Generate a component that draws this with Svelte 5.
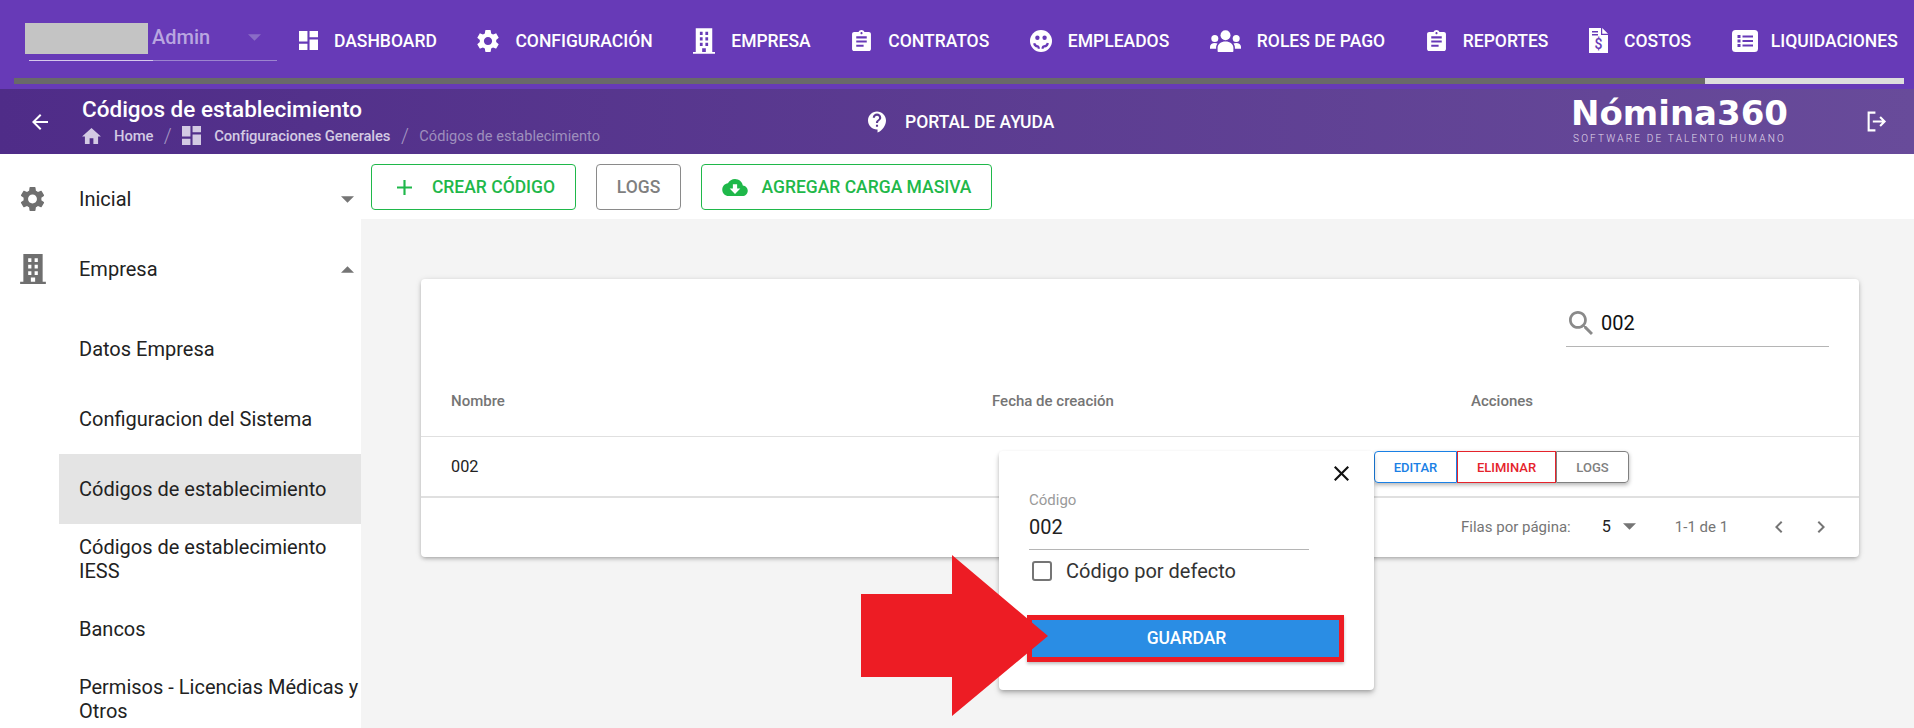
<script>
  const P = {
    dash: 'M3 13h8V3H3v10zm0 8h8v-6H3v6zm10 0h8V11h-8v10zm0-18v6h8V3h-8z',
    gear: 'M19.14 12.94c.04-.3.06-.61.06-.94 0-.32-.02-.64-.07-.94l2.03-1.58c.18-.14.23-.41.12-.61l-1.92-3.32c-.12-.22-.37-.29-.59-.22l-2.39.96c-.5-.38-1.03-.7-1.62-.94l-.36-2.54c-.04-.24-.24-.41-.48-.41h-3.84c-.24 0-.43.17-.47.41l-.36 2.54c-.59.24-1.13.57-1.62.94l-2.39-.96c-.22-.08-.47 0-.59.22L2.74 8.87c-.12.21-.08.47.12.61l2.03 1.58c-.05.3-.09.63-.09.94s.02.64.07.94l-2.03 1.58c-.18.14-.23.41-.12.61l1.92 3.32c.12.22.37.29.59.22l2.39-.96c.5.38 1.03.7 1.62.94l.36 2.54c.05.24.24.41.48.41h3.84c.24 0 .44-.17.47-.41l.36-2.54c.59-.24 1.13-.56 1.62-.94l2.39.96c.22.08.47 0 .59-.22l1.92-3.32c.12-.22.07-.47-.12-.61l-2.01-1.58zM12 15.6c-1.98 0-3.6-1.62-3.6-3.6s1.62-3.6 3.6-3.6 3.6 1.62 3.6 3.6-1.62 3.6-3.6 3.6z',
    building: 'M3 0h18v26h3v2H0v-2h3zM7.5 4v3.5h3V4zM13.5 4v3.5h3V4zM7.5 10v3.5h3V10zM13.5 10v3.5h3V10zM7.5 16v3.5h3V16zM13.5 16v3.5h3V16zM10 22v4h4v-4z',
    clip: 'M19 3h-4.18C14.4 1.84 13.3 1 12 1c-1.3 0-2.4.84-2.82 2H5c-1.1 0-2 .9-2 2v14c0 1.1.9 2 2 2h14c1.1 0 2-.9 2-2V5c0-1.1-.9-2-2-2zm-7 0c.55 0 1 .45 1 1s-.45 1-1 1-1-.45-1-1 .45-1 1-1zm2 14H7v-2h7v2zm3-4H7v-2h10v2zm0-4H7V7h10v2z',
    home: 'M10 20v-6h4v6h5v-8h3L12 3 2 12h3v8z',
    help: 'M11.5 2C6.81 2 3 5.81 3 10.5S6.81 19 11.5 19h.5v3c4.86-2.34 8-7 8-11.5C20 5.81 16.19 2 11.5 2zm1 14.5h-2v-2h2v2zm0-3.5h-2c0-3.25 3-3 3-5 0-1.1-.9-2-2-2s-2 .9-2 2h-2c0-2.21 1.79-4 4-4s4 1.79 4 4c0 2.5-3 2.75-3 5z',
    back: 'M20 11H7.83l5.59-5.59L12 4l-8 8 8 8 1.41-1.41L7.83 13H20v-2z',
    close: 'M19 6.41L17.59 5 12 10.59 6.41 5 5 6.41 10.59 12 5 17.59 6.41 19 12 13.41 17.59 19 19 17.59 13.41 12z',
    add: 'M19 13h-6v6h-2v-6H5v-2h6V5h2v6h6v2z',
    cloud: 'M19.35 10.04C18.67 6.59 15.64 4 12 4 9.11 4 6.6 5.64 5.35 8.04 2.34 8.36 0 10.91 0 14c0 3.31 2.69 6 6 6h13c2.76 0 5-2.24 5-5 0-2.64-2.05-4.78-4.65-4.96zM17 13l-5 5-5-5h3V9h4v4h3z',
    search: 'M15.5 14h-.79l-.28-.27C15.41 12.59 16 11.11 16 9.5 16 5.91 13.09 3 9.5 3S3 5.91 3 9.5 5.91 16 9.5 16c1.61 0 3.09-.59 4.23-1.57l.27.28v.79l5 4.99L20.49 19l-4.99-5zm-6 0C7.01 14 5 11.99 5 9.5S7.01 5 9.5 5 14 7.01 14 9.5 11.99 14 9.5 14z',
    left: 'M15.41 7.41L14 6l-6 6 6 6 1.41-1.41L10.83 12z',
    right: 'M10 6L8.59 7.41 13.17 12l-4.58 4.59L10 18l6-6z',
    down: 'M7 10l5 5 5-5z',
    up: 'M7 14l5-5 5 5z',
    logout: 'M10 2.5H2.5v19H10v-2H4.5v-15H10zM15.2 7l-1.4 1.4 2.6 2.6H7.5v2h8.9l-2.6 2.6 1.4 1.4 5-5z'
  };

  const nav = [
    { label: 'DASHBOARD', k: 'dash', box: '3 3 18 18', w: 19, h: 19 },
    { label: 'CONFIGURACIÓN', k: 'gear', box: '2.5 1.5 19 21', w: 22, h: 24 },
    { label: 'EMPRESA', k: 'building', box: '0 0 24 28', w: 22, h: 26 },
    { label: 'CONTRATOS', k: 'clip', box: '3 1 18 20', w: 21, h: 21 },
    { label: 'EMPLEADOS', k: 'face', w: 22, h: 22 },
    { label: 'ROLES DE PAGO', k: 'groups', w: 31, h: 22 },
    { label: 'REPORTES', k: 'clip', box: '3 1 18 20', w: 21, h: 21 },
    { label: 'COSTOS', k: 'doc', w: 19, h: 25 },
    { label: 'LIQUIDACIONES', k: 'list', w: 26, h: 22 }
  ];

  const subItems = [
    { label: 'Datos Empresa' },
    { label: 'Configuracion del Sistema' },
    { label: 'Códigos de establecimiento', active: true },
    { label: 'Códigos de establecimiento IESS' },
    { label: 'Bancos' },
    { label: 'Permisos - Licencias Médicas y Otros' }
  ];
</script>

{#snippet ic(d, box, w, h, cls = '')}
  <svg class={cls} viewBox={box} width={w} height={h} fill="currentColor" fill-rule="evenodd" aria-hidden="true"><path {d} /></svg>
{/snippet}

<div class="page">
  <header class="top">
    <div class="toprow">
      <div class="user">
        <div class="blank"></div>
        <span class="admin">Admin</span>
        <span class="caret">{@render ic(P.down, '7 10 10 5', 13, 7)}</span>
      </div>
      <nav class="nav">
        {#each nav as n}
          <div class="navitem">
            {#if n.k === 'face'}
              <svg viewBox="0 0 22 22" width={n.w} height={n.h} aria-hidden="true">
                <circle cx="11" cy="11" r="11" fill="#fff" />
                <circle cx="7.4" cy="7.8" r="2.2" fill="#673ab7" />
                <circle cx="14.6" cy="7.8" r="2.2" fill="#673ab7" />
                <path d="M4.2 13.2c.3 1.6 1.6 3 3.3 3.2.8.1 1.2.7 1.3 2.3M17.8 13c-.3 2-1.8 3.2-3.6 3.4-1 .1-1.6.7-1.6 2.4" fill="none" stroke="#673ab7" stroke-width="2.2" />
              </svg>
            {:else if n.k === 'groups'}
              <svg viewBox="0 0 31 22" width={n.w} height={n.h} fill="#fff" aria-hidden="true">
                <circle cx="15.5" cy="5.2" r="5" />
                <path d="M7.6 21c0 .6.4 1 1 1h13.8c.6 0 1-.4 1-1v-3.2c0-3.6-3.4-6.3-7.9-6.3s-7.9 2.7-7.9 6.3z" />
                <circle cx="4.8" cy="8.5" r="3.5" />
                <circle cx="26.2" cy="8.5" r="3.5" />
                <path d="M0 18.8v-2c0-2.4 2.2-3.8 4.8-3.8 1 0 1.9.2 2.7.6-.9 1.2-1.4 2.6-1.4 4.2v1zM31 18.8v-2c0-2.4-2.2-3.8-4.8-3.8-1 0-1.9.2-2.7.6.9 1.2 1.4 2.6 1.4 4.2v1z" />
              </svg>
            {:else if n.k === 'doc'}
              <svg viewBox="0 0 19 25" width={n.w} height={n.h} aria-hidden="true">
                <path d="M0 0h12v7h7v18H0zM13.2 0L19 5.8h-5.8z" fill="#fff" />
                <path d="M3 3h6v1.5H3zM3 6h6v1.5H3z" fill="#673ab7" />
                <text x="9.5" y="20.5" text-anchor="middle" class="dollar">$</text>
              </svg>
            {:else if n.k === 'list'}
              <svg viewBox="0 0 26 22" width={n.w} height={n.h} aria-hidden="true">
                <rect width="26" height="22" rx="3.5" fill="#fff" />
                <path d="M5.5 5h3v3h-3zM5.5 9.5h3v3h-3zM5.5 14h3v3h-3zM10.5 5.5h10.5v2H10.5zM10.5 10h10.5v2H10.5zM10.5 14.5h10.5v2H10.5z" fill="#673ab7" />
              </svg>
            {:else}
              {@render ic(P[n.k], n.box, n.w, n.h)}
            {/if}
            <span>{n.label}</span>
          </div>
        {/each}
      </nav>
    </div>
    <div class="progress"><div class="fill"></div></div>
  </header>

  <section class="sub">
    <span class="backbtn">{@render ic(P.back, '0 0 24 24', 24, 24)}</span>
    <div class="titles">
      <div class="title">Códigos de establecimiento</div>
      <div class="crumbs">
        {@render ic(P.home, '2 3 20 17', 19, 16, 'c1')}
        <span class="cb">Home</span>
        <i>/</i>
        {@render ic(P.dash, '3 3 18 18', 19, 19, 'c1')}
        <span class="cb">Configuraciones Generales</span>
        <i>/</i>
        <span class="cl">Códigos de establecimiento</span>
      </div>
    </div>
    <div class="portal">
      {@render ic(P.help, '3 2 17 20', 18, 22)}
      <span>PORTAL DE AYUDA</span>
    </div>
    <div class="logo">
      <div class="lname">Nómina360</div>
      <div class="ltag">SOFTWARE DE TALENTO HUMANO</div>
    </div>
    <span class="logoutbtn">{@render ic(P.logout, '0 0 24 24', 25, 25)}</span>
  </section>

  <div class="body">
    <aside class="side">
      <div class="sideitem">
        <span class="sicon">{@render ic(P.gear, '2.5 1.5 19 21', 25, 26)}</span>
        <span class="stext">Inicial</span>
        <span class="sarrow">{@render ic(P.down, '7 10 10 5', 13, 7)}</span>
      </div>
      <div class="sideitem">
        <span class="sicon">{@render ic(P.building, '0 0 24 28', 26, 30)}</span>
        <span class="stext">Empresa</span>
        <span class="sarrow">{@render ic(P.up, '7 9 10 5', 13, 7)}</span>
      </div>
      <div class="sublist">
        {#each subItems as s}
          <div class="subitem" class:active={s.active}>{s.label}</div>
        {/each}
      </div>
    </aside>

    <main class="main">
      <div class="toolbar">
        <button class="btn green w1">{@render ic(P.add, '5 5 14 14', 15, 15)}<span>CREAR CÓDIGO</span></button>
        <button class="btn gray">LOGS</button>
        <button class="btn green w2">{@render ic(P.cloud, '0 4 24 16', 26, 17)}<span>AGREGAR CARGA MASIVA</span></button>
      </div>
      <div class="content">
        <div class="card">
          <div class="cardtop">
            <div class="search">
              {@render ic(P.search, '3 3 17.5 17.5', 24, 24)}
              <span>002</span>
            </div>
          </div>
          <div class="row head">
            <span class="c1w">Nombre</span>
            <span class="c2w">Fecha de creación</span>
            <span>Acciones</span>
          </div>
          <div class="row data">
            <span class="val">002</span>
            <div class="acts">
              <button class="act blue">EDITAR</button>
              <button class="act red">ELIMINAR</button>
              <button class="act grey">LOGS</button>
            </div>
          </div>
          <div class="pager">
            <span>Filas por página:</span>
            <span class="num">5</span>
            <span class="pcaret">{@render ic(P.down, '7 10 10 5', 13, 7)}</span>
            <span class="range">1-1 de 1</span>
            <span class="chev">{@render ic(P.left, '0 0 24 24', 24, 24)}</span>
            <span class="chev ch2">{@render ic(P.right, '0 0 24 24', 24, 24)}</span>
          </div>
        </div>
      </div>
    </main>
  </div>

  <div class="modal">
    <span class="closebtn">{@render ic(P.close, '5 5 14 14', 15, 15)}</span>
    <div class="flabel">Código</div>
    <div class="fval">002</div>
    <label class="check"><span class="box"></span><span>Código por defecto</span></label>
    <div class="savewrap"><button class="save">GUARDAR</button></div>
  </div>

  <svg class="bigarrow" viewBox="0 0 187 161" width="187" height="161" aria-hidden="true">
    <path d="M0 39h91V0l96 81-96 80v-39H0z" fill="#ed1c24" />
  </svg>
</div>

<style>
  :global(body) { margin: 0; background: #fff; }
  .page {
    position: relative;
    width: 1914px;
    height: 728px;
    overflow: hidden;
    font-family: Roboto, "Liberation Sans", sans-serif;
    color: #222;
  }
  .top { height: 89px; background: #673ab7; }
  .toprow { height: 78px; display: flex; align-items: center; padding-left: 25px; box-sizing: border-box; }
  .user {
    position: relative;
    width: 273px;
    height: 78px;
    flex: none;
    box-sizing: border-box;
    padding-top: 23px;
    display: flex;
    align-items: flex-start;
  }
  .blank { width: 123px; height: 31px; background: #c4c4c4; }
  .admin { margin-left: 4px; font-size: 20px; font-weight: 500; line-height: 29px; color: #b9a6e0; }
  .caret { margin-left: 38px; margin-top: 11px; color: #8a6cc6; display: flex; }
  .user::after {
    content: "";
    position: absolute;
    left: 4px;
    top: 60px;
    width: 248px;
    height: 1px;
    background: linear-gradient(90deg, #d5c8ec 0 50%, #9c84cf 50%);
  }
  .nav { display: flex; align-items: center; gap: 40.6px; padding: 3px 0 0 1px; }
  .navitem { display: flex; align-items: center; gap: 16px; color: #fff; font-size: 17.5px; font-weight: 500; white-space: nowrap; }
  .navitem:last-child { gap: 13px; }
  .dollar { font: 500 14px Roboto, sans-serif; fill: #673ab7; }
  .progress { height: 6px; margin: 0 10px 0 14px; background: #ddd; }
  .fill { width: 1691px; height: 100%; background: #696969; }

  .sub {
    height: 65px;
    display: flex;
    align-items: center;
    background: linear-gradient(90deg, #4f2c88 0%, #684b9a 100%);
    color: #fff;
  }
  .backbtn { margin-left: 28px; display: flex; }
  .titles { margin-left: 30px; width: 786px; flex: none; }
  .title { font-size: 22.5px; font-weight: 500; line-height: 28px; margin-top: -1px; }
  .crumbs { display: flex; align-items: center; height: 24px; margin-top: 1px; color: #d3cae3; font-size: 14.8px; }
  .crumbs :global(.c1) { flex: none; margin-right: 13px; }
  .crumbs i { font-style: normal; font-size: 20px; font-weight: 300; margin: 0 10.5px; color: #a596c3; }
  .cb { font-weight: 500; letter-spacing: -0.1px; }
  .cl { color: #9e8fbd; font-size: 14.6px; }
  .portal { display: flex; align-items: center; gap: 19px; font-size: 17.5px; font-weight: 500; width: 700px; flex: none; }
  .logo { width: 223px; flex: none; text-align: center; align-self: flex-start; padding-top: 4px; }
  .lname { font-family: "DejaVu Sans", sans-serif; font-size: 34px; font-weight: 700; line-height: 40px; white-space: nowrap; }
  .ltag { font-size: 10px; font-weight: 300; letter-spacing: 2.2px; line-height: 12px; color: #e2dcec; white-space: nowrap; }
  .logoutbtn { margin-left: 74px; display: flex; }

  .body { display: flex; height: 574px; }
  .side { width: 361px; flex: none; background: #fff; box-sizing: border-box; padding-top: 10px; }
  .sideitem { height: 70px; display: flex; align-items: center; font-size: 20px; color: #222; }
  .sicon { width: 79px; padding-left: 20px; box-sizing: border-box; display: flex; color: #6f6f6f; flex: none; }
  .stext { flex: 1; }
  .sarrow { color: #757575; display: flex; margin-right: 7px; }
  .sublist { margin-top: 10px; padding-left: 59px; }
  .subitem {
    min-height: 70px;
    display: flex;
    align-items: center;
    padding-left: 20px;
    font-size: 20px;
    line-height: 24px;
    color: #222;
    box-sizing: border-box;
  }
  .subitem.active { background: #e4e4e4; }

  .main { flex: 1; display: flex; flex-direction: column; min-width: 0; }
  .toolbar { height: 65px; flex: none; display: flex; align-items: flex-start; padding: 10px 0 0 10px; gap: 20px; box-sizing: border-box; }
  .btn {
    height: 46px;
    box-sizing: border-box;
    border-radius: 4px;
    background: #fff;
    font-family: inherit;
    font-size: 17.5px;
    font-weight: 500;
    display: flex;
    align-items: center;
    justify-content: center;
    padding: 0;
  }
  .green { border: 1px solid #1fb84a; color: #1fb84a; }
  .gray { border: 1px solid #8a8a8a; color: #7f7f7f; width: 85px; }
  .w1 { width: 205px; gap: 20px; padding-left: 5px; }
  .w2 { width: 291px; gap: 14px; }
  .content { flex: 1; background: #f4f4f4; padding: 60px 55px 0 60px; }
  .card {
    height: 278px;
    background: #fff;
    border-radius: 4px;
    box-shadow: 0 2px 4px -1px rgba(0,0,0,.3), 0 1px 6px rgba(0,0,0,.12);
    display: flex;
    flex-direction: column;
  }
  .cardtop { height: 68px; flex: none; display: flex; justify-content: flex-end; padding-right: 30px; box-sizing: border-box; }
  .search {
    width: 263px;
    height: 68px;
    box-sizing: border-box;
    border-bottom: 1px solid #b5b5b5;
    display: flex;
    align-items: center;
    padding: 21px 0 0 3px;
    gap: 8px;
    color: #8a8a8a;
  }
  .search span { font-size: 20px; color: #111; }
  .row { display: flex; align-items: center; padding-left: 30px; border-bottom: 1px solid #e0e0e0; box-sizing: border-box; }
  .head { height: 90px; font-size: 15px; font-weight: 500; color: #757575; padding-top: 18px; }
  .c1w { width: 541px; }
  .c2w { width: 479px; }
  .data { height: 61px; border-bottom-width: 2px; padding-bottom: 1px; }
  .val { font-size: 16.25px; color: #222; width: 923px; flex: none; }
  .acts { display: flex; align-self: flex-start; margin-top: 14px; border-radius: 4px; box-shadow: 0 2px 4px rgba(0,0,0,.3); }
  .act { height: 32px; box-sizing: border-box; background: #fff; font-family: inherit; font-size: 13px; font-weight: 500; padding: 0; }
  .blue { width: 83px; border: 1px solid #1a80e5; color: #1a80e5; border-radius: 4px 0 0 4px; }
  .red { width: 99px; border: 1px solid #e5232b; color: #e5232b; }
  .grey { width: 73px; border: 1px solid #808080; color: #808080; border-radius: 0 4px 4px 0; }
  .pager { flex: 1; display: flex; align-items: center; padding: 0 0 2px 1040px; font-size: 15px; color: #757575; white-space: nowrap; }
  .num { margin-left: 31px; font-size: 16.25px; color: #222; }
  .pcaret { margin-left: 12px; display: flex; color: #757575; }
  .range { margin-left: 39px; }
  .chev { margin-left: 39px; display: flex; color: #757575; }
  .ch2 { margin-left: 18px; }

  .modal {
    position: absolute;
    left: 999px;
    top: 451px;
    width: 375px;
    height: 239px;
    box-sizing: border-box;
    padding: 40px 30px 0 30px;
    background: #fff;
    border-radius: 4px;
    box-shadow: 0 2px 4px -1px rgba(0,0,0,.3), 0 4px 6px rgba(0,0,0,.14);
  }
  .closebtn { position: absolute; top: 15px; left: 335px; display: flex; color: #111; }
  .flabel { font-size: 15px; line-height: 18px; color: #9a9a9a; }
  .fval {
    font-size: 20px;
    line-height: 28px;
    height: 40px;
    margin-top: 1px;
    width: 280px;
    color: #222;
    border-bottom: 1px solid #b5b5b5;
    box-sizing: border-box;
    padding-top: 3px;
  }
  .check { display: flex; align-items: center; height: 24px; margin-top: 9px; font-size: 20px; color: #333; padding-left: 3px; gap: 14px; }
  .box { width: 20px; height: 20px; box-sizing: border-box; border: 2.5px solid #757575; border-radius: 3px; flex: none; }
  .savewrap { margin: 32px 0 0 -2px; }
  .save {
    display: block;
    width: 317px;
    height: 47px;
    box-sizing: border-box;
    border: 5px solid #ed1c24;
    background: #2a8de4;
    color: #fff;
    font-family: inherit;
    font-size: 17.5px;
    font-weight: 500;
    padding: 0 0 2px 2px;
    box-shadow: 0 2px 3px rgba(0,0,0,.25);
  }
  .bigarrow { position: absolute; left: 861px; top: 555px; }
</style>
